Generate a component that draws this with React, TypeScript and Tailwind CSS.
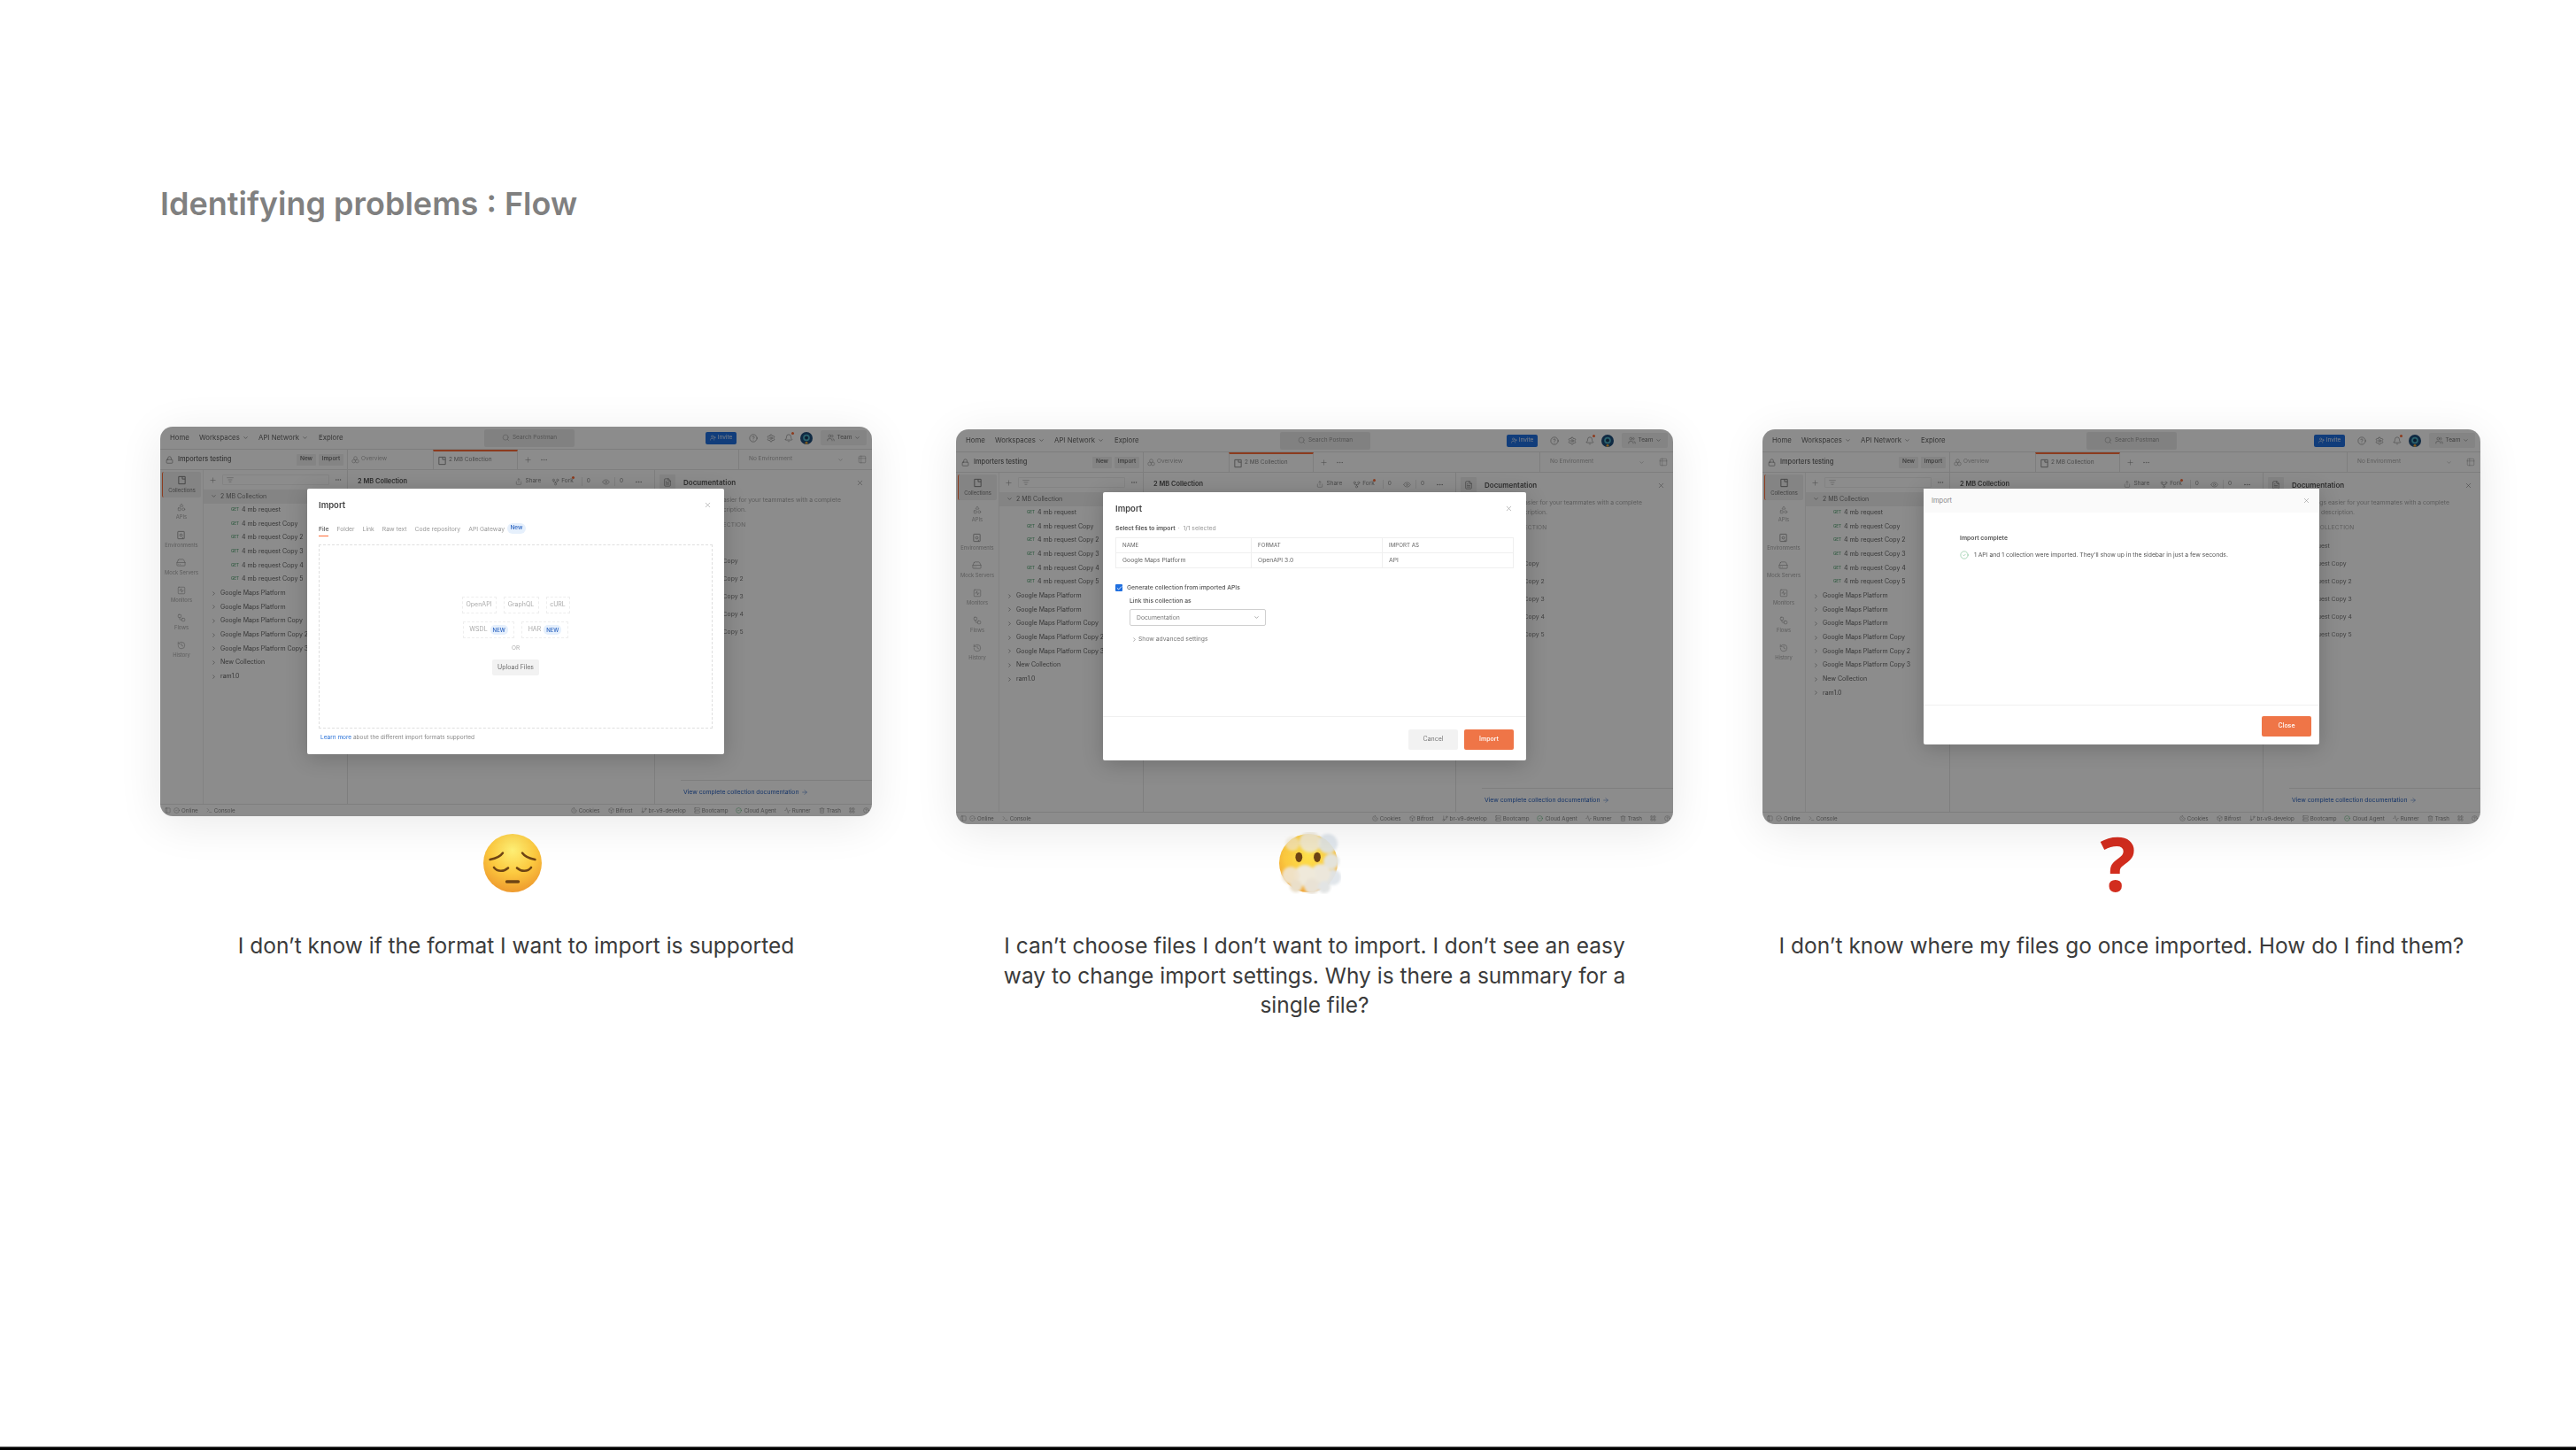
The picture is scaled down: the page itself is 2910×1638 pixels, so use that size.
import React from 'react';
import {
    Activity, ArrowRight, Bell, ChevronDown, ChevronRight, CircleCheck, CircleHelp, Cookie, Ellipsis, Eye,
    FileText, GitBranch, GitFork, HardDrive, History, LayoutGrid, ListFilter, Lock, PanelLeft, Plus, Search,
    Server, Settings, Share, Shapes, SquareActivity, Terminal, Trash2, UserPlus, Users, Workflow, X, Box,
    Check, Table2,
} from 'lucide-react';

const thin = { strokeWidth: 1.4 };

const CollectionIcon = () => (
    <svg width="11" height="11" viewBox="0 0 12 12" fill="none" stroke="currentColor" strokeWidth="1">
        <path d="M2 1.5h8v9H2zM6.5 1.5v3h3.500" />
    </svg>
);

const EnvIcon = () => (
    <svg width="11" height="11" viewBox="0 0 12 12" fill="none" stroke="currentColor" strokeWidth="1">
        <rect x="2" y="1.500" width="8" height="9" rx="0.500" />
        <circle cx="6" cy="6" r="1.500" />
        <path d="M8 10.500v-2" />
    </svg>
);

const OverviewIcon = () => (
    <svg width="9" height="9" viewBox="0 0 12 12" fill="none" stroke="currentColor" strokeWidth="0.900">
        <circle cx="6" cy="3.500" r="2.500" />
        <circle cx="3.500" cy="8" r="2.500" />
        <circle cx="8.500" cy="8" r="2.500" />
    </svg>
);

const Avatar = () => (
    <svg width="14" height="14" viewBox="0 0 14 14">
        <circle cx="7" cy="7" r="7" fill="#1e4d7a" />
        <circle cx="7" cy="6.500" r="3.800" fill="#4fb3c8" />
        <circle cx="7" cy="6.500" r="2" fill="#173a5c" />
        <circle cx="7" cy="12.300" r="1.500" fill="#e8a33a" />
    </svg>
);

const railItems = [
    { label: 'APIs', icon: <Shapes size={10} {...thin} /> },
    { label: 'Environments', icon: <EnvIcon /> },
    { label: 'Mock Servers', icon: <HardDrive size={11} {...thin} /> },
    { label: 'Monitors', icon: <SquareActivity size={10} {...thin} /> },
    { label: 'Flows', icon: <Workflow size={10} {...thin} /> },
    { label: 'History', icon: <History size={10} {...thin} /> },
];

const requests = ['4 mb request', '4 mb request Copy', '4 mb request Copy 2', '4 mb request Copy 3', '4 mb request Copy 4', '4 mb request Copy 5'];

const TopBar = () => (
    <div className="flex h-[26px] shrink-0 items-center border-b border-[#e6e6e6] pl-[11px] pr-[6px] text-[7.8px] text-[#666]">
        <div className="flex w-[355px] items-center">
            <span className="w-[33px]">Home</span>
            <span className="flex w-[67px] items-center gap-[3px]">Workspaces <ChevronDown size={7} /></span>
            <span className="flex w-[68px] items-center gap-[3px]">API Network <ChevronDown size={7} /></span>
            <span>Explore</span>
        </div>
        <div className="flex h-[20px] w-[102px] items-center justify-center gap-[3px] rounded-[2px] bg-[#ebebeb] text-[6.5px] text-[#999]">
            <Search size={9} {...thin} /> Search Postman
        </div>
        <div className="ml-auto flex items-center">
            <span className="mr-[9px] flex h-[14px] w-[35px] items-center justify-center gap-[2px] rounded-[2px] bg-[#1f6fe0] text-[6.500px] text-[#dfe9f8]">
                <UserPlus size={7} /> Invite
            </span>
            <span className="flex w-[20px] justify-center text-[#777]"><CircleHelp size={10} {...thin} /></span>
            <span className="flex w-[20px] justify-center text-[#777]"><Settings size={10} {...thin} /></span>
            <span className="relative flex w-[20px] justify-center text-[#777]">
                <Bell size={10} {...thin} />
                <i className="absolute right-[4px] top-[-2px] h-[3px] w-[3px] rounded-full bg-[#ff6c37]" />
            </span>
            <span className="flex w-[20px] justify-center"><Avatar /></span>
            <span className="ml-[6px] flex h-[17px] w-[52px] items-center justify-center gap-[3px] rounded-[2px] bg-[#f0f0f0] text-[6.5px] text-[#777]">
                <Users size={9} {...thin} /> Team <ChevronDown size={7} />
            </span>
        </div>
    </div>
);

const TabBar = () => (
    <div className="flex h-[23px] shrink-0 items-stretch border-b border-[#e6e6e6]">
        <div className="flex w-[212px] shrink-0 items-center border-r border-[#e6e6e6] pl-[6px] pr-[4px] text-[7.400px] font-medium text-[#666]">
            <Lock size={9} {...thin} className="mr-[5px]" />
            <span>Importers testing</span>
            <span className="ml-auto flex h-[13px] w-[22px] items-center justify-center rounded-[1px] bg-[#f0f0f0] text-[6.500px]">New</span>
            <span className="ml-[3px] flex h-[13px] w-[28px] items-center justify-center rounded-[1px] bg-[#f0f0f0] text-[6.500px]">Import</span>
        </div>
        <div className="flex w-[96px] items-center gap-[2px] pl-[4px] text-[6.500px] text-[#aaa]">
            <OverviewIcon /> Overview
        </div>
        <div className="flex w-[96px] items-center gap-[2px] border-x border-t-2 border-x-[#e6e6e6] border-t-[#ff6c37] bg-white pl-[4px] text-[6.500px] text-[#888]">
            <CollectionIcon /> 2 MB Collection
        </div>
        <div className="flex items-center gap-[9px] pl-[7px] text-[#888]">
            <Plus size={9} {...thin} />
            <Ellipsis size={9} {...thin} />
        </div>
        <div className="ml-auto flex w-[151px] items-center border-l border-[#e6e6e6] pl-[11px] pr-[6px] text-[6.500px] text-[#aaa]">
            No Environment
            <ChevronDown size={7} className="ml-auto mr-[16px]" />
            <Table2 size={10} {...thin} />
        </div>
    </div>
);

const Rail = () => (
    <div className="flex w-[49px] shrink-0 flex-col items-center border-r border-[#ededed] pt-[2px] text-[5.800px] text-[#aaa]">
        <div className="flex h-[29px] w-[44px] flex-col items-center justify-center gap-[2px] rounded-[2px] border-l border-[#ff6c37] bg-[#f0f0f0] text-[#777]">
            <CollectionIcon />
            Collections
        </div>
        <div className="flex flex-col items-center">
            {railItems.map((item) => (
                <div key={item.label} className="flex h-[31.2px] flex-col items-center justify-center gap-[2px] whitespace-nowrap pt-[2px] text-[#aaa]">
                    <span className="text-[#999]">{item.icon}</span>
                    {item.label}
                </div>
            ))}
        </div>
    </div>
);

const CollectionList = ({ folders }: { folders: string[] }) => (
    <div className="w-[163px] shrink-0 overflow-hidden border-r border-[#e6e6e6] text-[7px] text-[#666]">
        <div className="flex h-[22px] items-center pl-[6px] pr-[6px] text-[#888]">
            <Plus size={9} {...thin} />
            <div className="ml-[6px] flex h-[12px] w-[121px] items-center rounded-[1px] border border-[#efefef] pl-[4px]">
                <ListFilter size={8} {...thin} />
            </div>
            <Ellipsis size={8} className="ml-auto" />
        </div>
        <div className="flex h-[15.65px] items-center bg-[#f0f0f0] pl-[8px]">
            <ChevronDown size={7} className="mr-[4px]" /> <span className="text-[#777]">2 MB Collection</span>
        </div>
        {requests.map((r) => (
            <div key={r} className="flex h-[15.65px] items-center whitespace-nowrap pl-[31px]">
                <span className="mr-[3px] w-[9px] text-[4.500px] font-medium text-[#5da87a]">GET</span>
                {r}
            </div>
        ))}
        {folders.map((f, i) => (
            <div key={i} className="flex h-[15.65px] items-center whitespace-nowrap pl-[8px]">
                <ChevronRight size={7} className="mr-[4px]" /> {f}
            </div>
        ))}
    </div>
);

const Content = () => (
    <div className="flex h-[23px] min-w-0 flex-1 items-center pl-[11px] pr-[13px] pt-[3px] text-[#888]">
        <span className="text-[7.400px] font-semibold text-[#555]">2 MB Collection</span>
        <span className="ml-auto flex items-center gap-[3px] text-[6.500px]"><Share size={8} {...thin} /> Share</span>
        <span className="relative ml-[12px] flex items-center gap-[2px] text-[6.500px]">
            <GitFork size={9} {...thin} /> Fork
            <i className="absolute right-[-1px] top-[-1px] h-[3px] w-[3px] rounded-full bg-[#ff6c37]" />
        </span>
        <span className="ml-[9px] border-l border-[#e6e6e6] pl-[5px] text-[6.500px]">0</span>
        <Eye size={9} {...thin} className="ml-[13px]" />
        <span className="ml-[5px] border-l border-[#e6e6e6] pl-[5px] text-[6.500px]">0</span>
        <Ellipsis size={9} className="ml-[13px]" />
    </div>
);

const Docs = () => (
    <div className="flex w-[246px] shrink-0 flex-col border-l border-[#e6e6e6] pl-[5px] text-[#aaa]">
        <div className="flex h-[24px] items-center pr-[9px] pt-[4px]">
            <span className="flex h-[18px] w-[18px] items-center justify-center rounded-[1px] bg-[#f0f0f0] text-[#666]"><FileText size={10} {...thin} /></span>
            <span className="ml-[9px] text-[8px] font-semibold text-[#555]">Documentation</span>
            <X size={9} {...thin} className="ml-auto text-[#777]" />
        </div>
        <div className="flex flex-col pl-[27px] pt-[4px] text-[6.800px] leading-[11px]">
            <span className="whitespace-nowrap">Make things easier for your teammates with a complete</span>
            <span>collection description.</span>
            <span className="mt-[7px] text-[6.500px] tracking-[0.2px]">IN THIS COLLECTION</span>
            <div className="mt-[5px] flex flex-col text-[#777]">
                {requests.map((r) => <span key={r} className="h-[20px] leading-[20px]">{r}</span>)}
            </div>
        </div>
        <div className="ml-[24px] mt-auto flex h-[27px] items-center gap-[3px] border-t border-[#e6e6e6] pl-[3px] text-[6.800px] text-[#2a62c0]">
            View complete collection documentation <ArrowRight size={8} {...thin} />
        </div>
    </div>
);

const StatusBar = () => (
    <div className="flex h-[14px] shrink-0 items-center border-t border-[#e6e6e6] pl-[5px] pr-[3px] text-[6.200px] text-[#888]">
        <PanelLeft size={7} {...thin} className="mr-[3px]" />
        <span className="flex items-center gap-[2px]"><CircleCheck size={7} {...thin} /> Online</span>
        <span className="ml-[9px] flex items-center gap-[2px]"><Terminal size={7} {...thin} /> Console</span>
        <div className="ml-auto flex items-center gap-[9px]">
            <span className="flex items-center gap-[2px]"><Cookie size={7} {...thin} /> Cookies</span>
            <span className="flex items-center gap-[2px]"><Box size={7} {...thin} /> Bifrost</span>
            <span className="flex items-center gap-[2px]"><GitBranch size={7} {...thin} /> br-v9-develop</span>
            <span className="flex items-center gap-[2px]"><Server size={7} {...thin} /> Bootcamp</span>
            <span className="flex items-center gap-[2px]"><CircleCheck size={7} {...thin} className="text-[#3aa35c]" /> Cloud Agent</span>
            <span className="flex items-center gap-[2px]"><Activity size={7} {...thin} /> Runner</span>
            <span className="flex items-center gap-[2px]"><Trash2 size={7} {...thin} /> Trash</span>
            <LayoutGrid size={7} {...thin} />
            <CircleHelp size={7} {...thin} />
        </div>
    </div>
);

const ImportFileModal = () => (
    <div className="absolute left-[166px] top-[70px] z-20 flex h-[300px] w-[471px] flex-col rounded-[2px] bg-white px-[13px] text-[#6b6b6b] shadow-[0_4px_24px_rgba(0,0,0,0.2)]">
        <div className="flex h-[37px] shrink-0 items-center pt-[2px]">
            <span className="text-[9.500px] font-semibold text-[#444]">Import</span>
            <X size={9} {...thin} className="ml-auto mr-[1px] mt-[-2px] text-[#888]" />
        </div>
        <div className="flex h-[26px] shrink-0 text-[6.800px] text-[#999]">
            <span className="mr-[9px] h-[17px] border-b border-[#ff6c37] pt-[4px] font-medium text-[#555]">File</span>
            <span className="mr-[9px] pt-[4px]">Folder</span>
            <span className="mr-[9px] pt-[4px]">Link</span>
            <span className="mr-[9px] pt-[4px]">Raw text</span>
            <span className="mr-[9px] pt-[4px]">Code repository</span>
            <span className="pt-[4px]">API Gateway</span>
            <span className="ml-[3px] mt-[2px] flex h-[12px] w-[21px] items-center justify-center rounded-[6px] bg-[#e6f0fc] text-[6.500px] font-medium text-[#2a62c0]">New</span>
        </div>
        <div className="flex h-[208px] shrink-0 flex-col items-center border border-dashed border-[#dfdfdf] pt-[58px] text-[7px] text-[#aaa]">
            <div className="flex gap-[8px]">
                <span className="flex h-[19px] w-[39px] items-center justify-center border border-dashed border-[#eee]">OpenAPI</span>
                <span className="flex h-[19px] w-[40px] items-center justify-center border border-dashed border-[#eee]">GraphQL</span>
                <span className="flex h-[19px] w-[27px] items-center justify-center border border-dashed border-[#eee]">cURL</span>
            </div>
            <div className="mt-[9px] flex gap-[8px]">
                <span className="flex h-[19px] w-[58px] items-center justify-center gap-[3px] border border-dashed border-[#eee]">
                    WSDL <b className="rounded-[5px] bg-[#e6f0fc] px-[3px] py-[1px] text-[6px] font-medium text-[#2a62c0]">NEW</b>
                </span>
                <span className="flex h-[19px] w-[53px] items-center justify-center gap-[3px] border border-dashed border-[#eee]">
                    HAR <b className="rounded-[5px] bg-[#e6f0fc] px-[3px] py-[1px] text-[6px] font-medium text-[#2a62c0]">NEW</b>
                </span>
            </div>
            <span className="mt-[7px] text-[6.500px]">OR</span>
            <span className="mt-[7px] flex h-[18px] w-[53px] items-center justify-center rounded-[2px] bg-[#f2f2f2] text-[#6b6b6b]">Upload Files</span>
        </div>
        <div className="pl-[2px] pt-[6px] text-[6.500px] text-[#888]">
            <span className="text-[#2a72d8]">Learn more</span> about the different import formats supported
        </div>
    </div>
);

const SelectFilesModal = () => (
    <div className="absolute left-[166px] top-[71px] z-20 flex h-[303px] w-[478px] flex-col rounded-[2px] bg-white text-[#555] shadow-[0_4px_24px_rgba(0,0,0,0.2)]">
        <div className="flex h-[37px] shrink-0 items-center px-[14px] pt-[2px]">
            <span className="text-[9.500px] font-semibold text-[#444]">Import</span>
            <X size={9} {...thin} className="ml-auto mr-[1px] mt-[-2px] text-[#888]" />
        </div>
        <div className="flex flex-1 flex-col px-[14px] text-[6.800px]">
            <div className="flex h-[9px] items-center">
                <span className="font-semibold">Select files to import</span>
                <span className="ml-[3px] text-[#999]">· &nbsp;1/1 selected</span>
            </div>
            <div className="mt-[5px] grid h-[35px] grid-cols-[153px_148px_1fr] border border-[#efefef] text-[#666]">
                <span className="flex items-center border-b border-r border-[#efefef] pl-[7px] text-[6.200px]">NAME</span>
                <span className="flex items-center border-b border-r border-[#efefef] pl-[7px] text-[6.200px]">FORMAT</span>
                <span className="flex items-center border-b border-[#efefef] pl-[7px] text-[6.200px]">IMPORT AS</span>
                <span className="flex items-center border-r border-[#efefef] pl-[7px]">Google Maps Platform</span>
                <span className="flex items-center border-r border-[#efefef] pl-[7px]">OpenAPI 3.0</span>
                <span className="flex items-center pl-[7px]">API</span>
            </div>
            <div className="mt-[17px] flex items-center gap-[5px]">
                <span className="flex h-[8px] w-[8px] items-center justify-center rounded-[1px] bg-[#1f6fe0] text-white"><Check size={7} strokeWidth={3} /></span>
                <span className="font-medium">Generate collection from imported APIs</span>
            </div>
            <span className="ml-[16px] mt-[5px] font-medium">Link this collection as</span>
            <div className="ml-[16px] mt-[4px] flex h-[19px] w-[154px] items-center rounded-[2px] border border-[#cfcfcf] pl-[7px] pr-[6px] text-[#777]">
                Documentation
                <ChevronDown size={7} className="ml-auto" />
            </div>
            <div className="ml-[18px] mt-[10px] flex items-center gap-[1px] text-[#777]">
                <ChevronRight size={7} /> Show advanced settings
            </div>
        </div>
        <div className="flex h-[50px] shrink-0 items-start justify-end gap-[7px] border-t border-[#f0f0f0] pr-[14px] pt-[14px] text-[7px]">
            <span className="flex h-[23px] w-[56px] items-center justify-center rounded-[2px] bg-[#f2f2f2] text-[#777]">Cancel</span>
            <span className="flex h-[23px] w-[56px] items-center justify-center rounded-[2px] bg-[#ef7547] font-medium text-white">Import</span>
        </div>
    </div>
);

const CompleteModal = () => (
    <div className="absolute left-[182px] top-[67px] z-20 flex h-[289px] w-[447px] flex-col rounded-[2px] bg-white text-[#555] shadow-[0_4px_24px_rgba(0,0,0,0.2)]">
        <div className="flex h-[27px] shrink-0 items-center bg-[#fafafa] pl-[9px] pr-[10px] text-[7.500px] text-[#888]">
            Import
            <X size={9} {...thin} className="ml-auto" />
        </div>
        <div className="flex flex-1 flex-col pl-[41px] pt-[24px] text-[6.800px]">
            <span className="font-semibold">Import complete</span>
            <div className="mt-[9px] flex items-center gap-[6px]">
                <CircleCheck size={10} strokeWidth={1} className="text-[#3aa35c]" />
                <span>1 API and 1 collection were imported. They'll show up in the sidebar in just a few seconds.</span>
            </div>
        </div>
        <div className="flex h-[45px] shrink-0 items-start justify-end border-t border-[#f0f0f0] pr-[9px] pt-[12px]">
            <span className="flex h-[23px] w-[56px] items-center justify-center rounded-[2px] bg-[#ef7547] text-[7px] font-medium text-white">Close</span>
        </div>
    </div>
);

const AppShot = ({ width, height, folders, modal }: { width: string; height: string; folders: string[]; modal: React.ReactNode }) => (
    <div className={`relative flex flex-col overflow-hidden rounded-[14px] bg-white shadow-[0_8px_50px_rgba(0,0,0,0.09)] blur-[0.5px] ${width} ${height}`}>
        <TopBar />
        <TabBar />
        <div className="flex min-h-0 flex-1">
            <Rail />
            <CollectionList folders={folders} />
            <Content />
            <Docs />
        </div>
        <StatusBar />
        <div className="absolute inset-0 z-10 bg-black/45" />
        {modal}
    </div>
);

const SadFace = () => (
    <svg width="66" height="66" viewBox="-33 -33 66 66">
        <defs>
            <radialGradient id="sad" cx="50%" cy="28%" r="72%">
                <stop offset="0%" stopColor="#fff176" />
                <stop offset="55%" stopColor="#fcc93f" />
                <stop offset="100%" stopColor="#ee9a2e" />
            </radialGradient>
        </defs>
        <circle r="33" fill="url(#sad)" />
        <g fill="none" stroke="#6e4414" strokeLinecap="round">
            <path d="M-25.500-4C-20-5-14-7-11-11.500" strokeWidth="2.400" />
            <path d="M25.500-4C20-5 14-7 11-11.500" strokeWidth="2.400" />
            <path d="M-21 5C-17 10-10 10-5 5.500" strokeWidth="2.600" />
            <path d="M21 5C17 10 10 10 5 5.500" strokeWidth="2.600" />
            <path d="M-6.500 21H6.500" strokeWidth="3.400" />
        </g>
    </svg>
);

const CloudFace = () => (
    <svg width="72" height="70" viewBox="-35 -35 72 70">
        <defs>
            <radialGradient id="mask" cx="50%" cy="35%" r="70%">
                <stop offset="0%" stopColor="#ffe34d" />
                <stop offset="60%" stopColor="#fcc93f" />
                <stop offset="100%" stopColor="#ee9a2e" />
            </radialGradient>
            <filter id="soft"><feGaussianBlur stdDeviation="1.800" /></filter>
        </defs>
        <circle r="33" fill="url(#mask)" />
        <g filter="url(#soft)">
            <circle cx="22" cy="-22" r="11" fill="#dfe6ec" opacity="0.900" />
            <circle cx="2" cy="-24" r="12" fill="#f0ebdd" opacity="0.850" />
            <circle cx="-18" cy="-22" r="8" fill="#f3ead6" opacity="0.650" />
            <circle cx="26" cy="-2" r="9" fill="#e4e6e4" opacity="0.950" />
            <circle cx="28" cy="16" r="9" fill="#dfe5ea" opacity="0.950" />
            <circle cx="14" cy="12" r="11" fill="#ece7db" />
            <circle cx="-4" cy="14" r="12" fill="#efe9da" />
            <circle cx="-20" cy="14" r="10" fill="#efe3cb" opacity="0.950" />
            <circle cx="4" cy="26" r="9" fill="#e9e2d5" />
            <circle cx="18" cy="27" r="7" fill="#e2e4e4" />
            <circle cx="-14" cy="26" r="7" fill="#eadfc9" />
        </g>
        <ellipse cx="-10.700" cy="-6.700" rx="3.900" ry="5.600" fill="#6e4414" />
        <ellipse cx="10" cy="-6.700" rx="3.900" ry="5.600" fill="#6e4414" />
    </svg>
);

const foldersA = ['Google Maps Platform', 'Google Maps Platform', 'Google Maps Platform Copy', 'Google Maps Platform Copy 2', 'Google Maps Platform Copy 3', 'New Collection', 'ram1.0'];
const foldersB = ['Google Maps Platform', ...foldersA];

export default function App() {
    return (
        <div className="flex h-[1638px] w-[2910px] flex-col overflow-hidden bg-white font-[Inter,sans-serif]">
            <div className="h-[482px] shrink-0 pl-[181px] pt-[207px]">
                <h1 className="text-[36px] font-semibold leading-[46px] text-[#808080]">Identifying problems : Flow</h1>
            </div>
            <div className="flex items-start pl-[181px]">
                <div className="flex w-[804px] flex-col items-center">
                    <AppShot width="w-[804px]" height="h-[440px]" folders={foldersA} modal={<ImportFileModal />} />
                    <div className="mr-[8px] mt-[20px] h-[66px]"><SadFace /></div>
                    <p className="mt-[44px] w-[700px] text-center text-[24.5px] leading-[33.6px] text-[#3b3b3b]">I don’t know if the format I want to import is supported</p>
                </div>
                <div className="ml-[95px] mt-[3px] flex w-[810px] flex-col items-center">
                    <AppShot width="w-[810px]" height="h-[446px]" folders={foldersA} modal={<SelectFilesModal />} />
                    <div className="mr-[12px] mt-[9px] h-[68px]"><CloudFace /></div>
                    <p className="mt-[44px] w-[705px] text-center text-[24.5px] leading-[33.6px] text-[#3b3b3b]">I can’t choose files I don’t want to import. I don’t see an easy way to change import settings. Why is there a summary for a single file?</p>
                </div>
                <div className="ml-[101px] mt-[3px] flex w-[811px] flex-col items-center">
                    <AppShot width="w-[811px]" height="h-[446px]" folders={foldersB} modal={<CompleteModal />} />
                    <div className="mr-[8px] mt-[11px] flex h-[66px] items-center font-['Open_Sans',sans-serif] text-[84px] font-bold leading-none text-[#d22d1e]">?</div>
                    <p className="mt-[44px] w-[800px] text-center text-[24.5px] leading-[33.6px] text-[#3b3b3b]">I don’t know where my files go once imported. How do I find them?</p>
                </div>
            </div>
            <div className="mt-auto h-[4px] shrink-0 border-t border-[#666] bg-black" />
        </div>
    );
}
